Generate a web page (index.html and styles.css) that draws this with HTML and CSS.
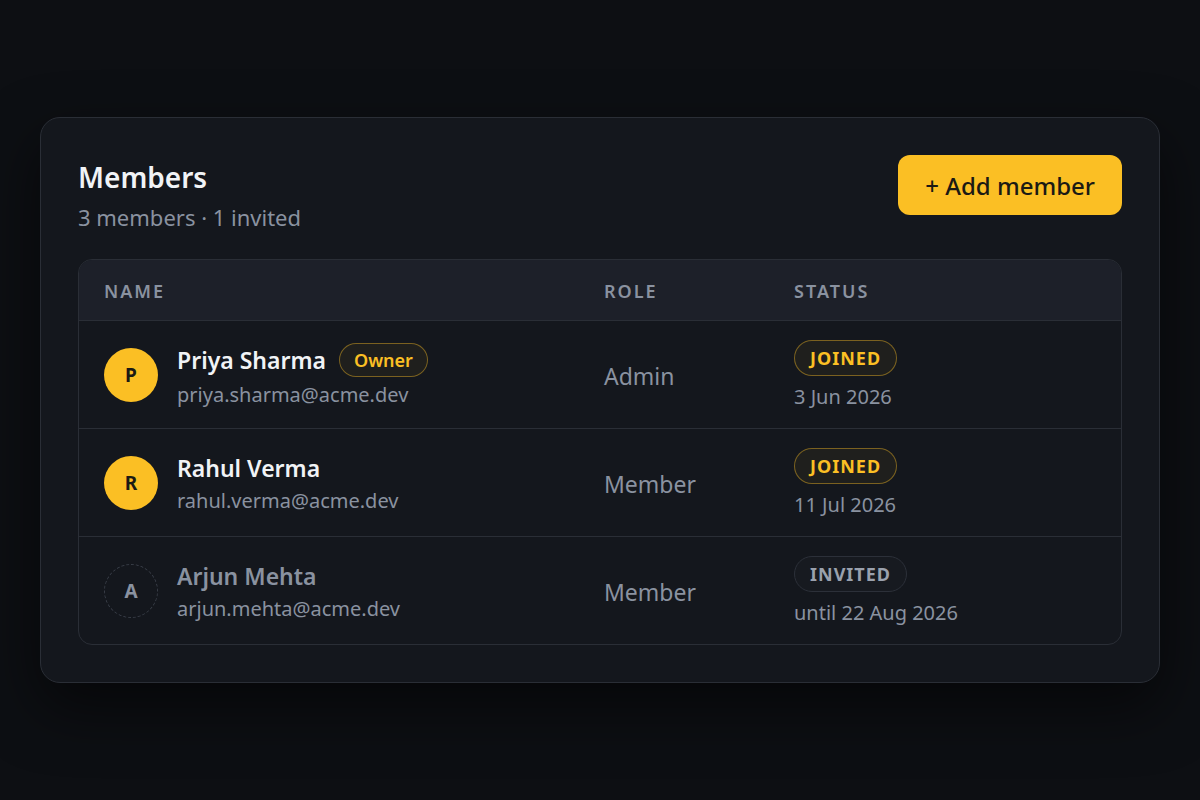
FILE: index.html
```html
<!DOCTYPE html>
<html lang="en">
<head>
  <meta charset="UTF-8" />
  <meta name="viewport" content="width=device-width, initial-scale=1.0"/>
  <title>Members</title>
  <link rel="stylesheet" href="styles.css">
</head>
<body>
  <div class="card">
    <div class="card-header">
      <div>
        <h1>Members</h1>
        <p class="subtitle">3 members · 1 invited</p>
      </div>
      <button class="add-btn">+ Add member</button>
    </div>

    <div class="members">
      <div class="row head">
        <div class="cell">Name</div>
        <div class="cell">Role</div>
        <div class="cell">Status</div>
      </div>

      <div class="row">
        <div class="cell person">
          <div class="avatar">P</div>
          <div class="who">
            <div class="name">Priya Sharma <span class="tag">Owner</span></div>
            <div class="email">priya.sharma@acme.dev</div>
          </div>
        </div>
        <div class="cell role">Admin</div>
        <div class="cell status">
          <span class="badge joined">Joined</span>
          <span class="date">3 Jun 2026</span>
        </div>
      </div>

      <div class="row">
        <div class="cell person">
          <div class="avatar">R</div>
          <div class="who">
            <div class="name">Rahul Verma</div>
            <div class="email">rahul.verma@acme.dev</div>
          </div>
        </div>
        <div class="cell role">Member</div>
        <div class="cell status">
          <span class="badge joined">Joined</span>
          <span class="date">11 Jul 2026</span>
        </div>
      </div>

      <div class="row pending">
        <div class="cell person">
          <div class="avatar">A</div>
          <div class="who">
            <div class="name">Arjun Mehta</div>
            <div class="email">arjun.mehta@acme.dev</div>
          </div>
        </div>
        <div class="cell role">Member</div>
        <div class="cell status">
          <span class="badge invited">Invited</span>
          <span class="date">until 22 Aug 2026</span>
        </div>
      </div>
    </div>
  </div>
</body>
</html>
```

FILE: styles.css
```css
* {
  box-sizing: border-box;
}

body {
  margin: 0;
  height: 800px;
  background-color: #0d0f13;
  font-family: "Noto Sans", "Open Sans", sans-serif;
  color: #e9ecf1;
  display: flex;
  align-items: center;
  justify-content: center;
}

.card {
  width: 1120px;
  padding: 37px;
  background-color: #14171d;
  border: 1px solid #2a2e36;
  border-radius: 20px;
  box-shadow: 0 24px 60px rgba(0,0,0,0.55);
}

.card-header {
  display: flex;
  justify-content: space-between;
  align-items: flex-start;
  margin-bottom: 27px;
}

h1 {
  margin: 0;
  padding-top: 2px;
  font-size: 28px;
  font-weight: 600;
  line-height: 40px;
  color: #f1f3f6;
}

.subtitle {
  margin: 5px 0 0;
  font-size: 22px;
  line-height: 30px;
  color: #8a92a0;
}

.add-btn {
  height: 60px;
  padding: 0 27px;
  font-family: inherit;
  font-size: 24px;
  font-weight: 500;
  color: #1b1a14;
  background-color: #fbbf24;
  border: none;
  border-radius: 12px;
  cursor: pointer;
}

/* === Table === */
.members {
  border: 1px solid #2a2e36;
  border-radius: 14px;
  overflow: hidden;
}

.row {
  display: grid;
  grid-template-columns: 500px 190px 1fr;
  align-items: center;
  height: 108px;
  border-bottom: 1px solid #2a2e36;
}

.row:last-child {
  height: 107px;
  border-bottom: none;
}

.row.head {
  height: 61px;
  background-color: #1d2029;
}

.cell {
  padding: 0 25px;
}

.head .cell {
  padding-top: 1px;
  font-size: 18px;
  font-weight: 600;
  letter-spacing: 2px;
  text-transform: uppercase;
  color: #8a92a0;
}

.person {
  display: flex;
  align-items: center;
  gap: 19px;
}

.avatar {
  width: 54px;
  height: 54px;
  border-radius: 50%;
  background-color: #fbbf24;
  color: #1b1a14;
  font-size: 19px;
  font-weight: 700;
  display: flex;
  align-items: center;
  justify-content: center;
  flex-shrink: 0;
}

.who {
  display: flex;
  flex-direction: column;
  gap: 4px;
  padding-top: 3px;
}

.name {
  font-size: 23px;
  font-weight: 600;
  line-height: 30px;
  color: #f1f3f6;
  display: flex;
  align-items: center;
  gap: 13px;
}

.email {
  font-size: 20px;
  line-height: 28px;
  color: #8a92a0;
}

.tag {
  height: 34px;
  padding: 0 14px;
  font-size: 18px;
  font-weight: 600;
  color: #fbbf24;
  border: 1.5px solid rgba(251,191,36,0.42);
  background-color: rgba(251,191,36,0.05);
  border-radius: 17px;
  display: flex;
  align-items: center;
}

.role {
  padding-top: 3px;
  font-size: 23px;
  color: #8a92a0;
}

.status {
  display: flex;
  flex-direction: column;
  align-items: flex-start;
  gap: 7px;
  padding-top: 2px;
}

.badge {
  height: 36px;
  padding: 0 15px;
  font-size: 18px;
  font-weight: 700;
  letter-spacing: 1px;
  text-transform: uppercase;
  border-radius: 18px;
  display: flex;
  align-items: center;
}

.badge.joined {
  color: #fbbf24;
  border: 1.5px solid rgba(251,191,36,0.42);
  background-color: rgba(251,191,36,0.05);
}

.badge.invited {
  color: #9aa1ad;
  border: 1.5px solid #2c3039;
  background-color: #171a20;
}

.date {
  font-size: 20px;
  line-height: 28px;
  color: #8a92a0;
}

/* === Pending invite === */
.pending .avatar {
  background-color: transparent;
  border: 1.5px dashed #3a3f49;
  color: #8a92a0;
}

.pending .name {
  color: #8a92a0;
}
```
